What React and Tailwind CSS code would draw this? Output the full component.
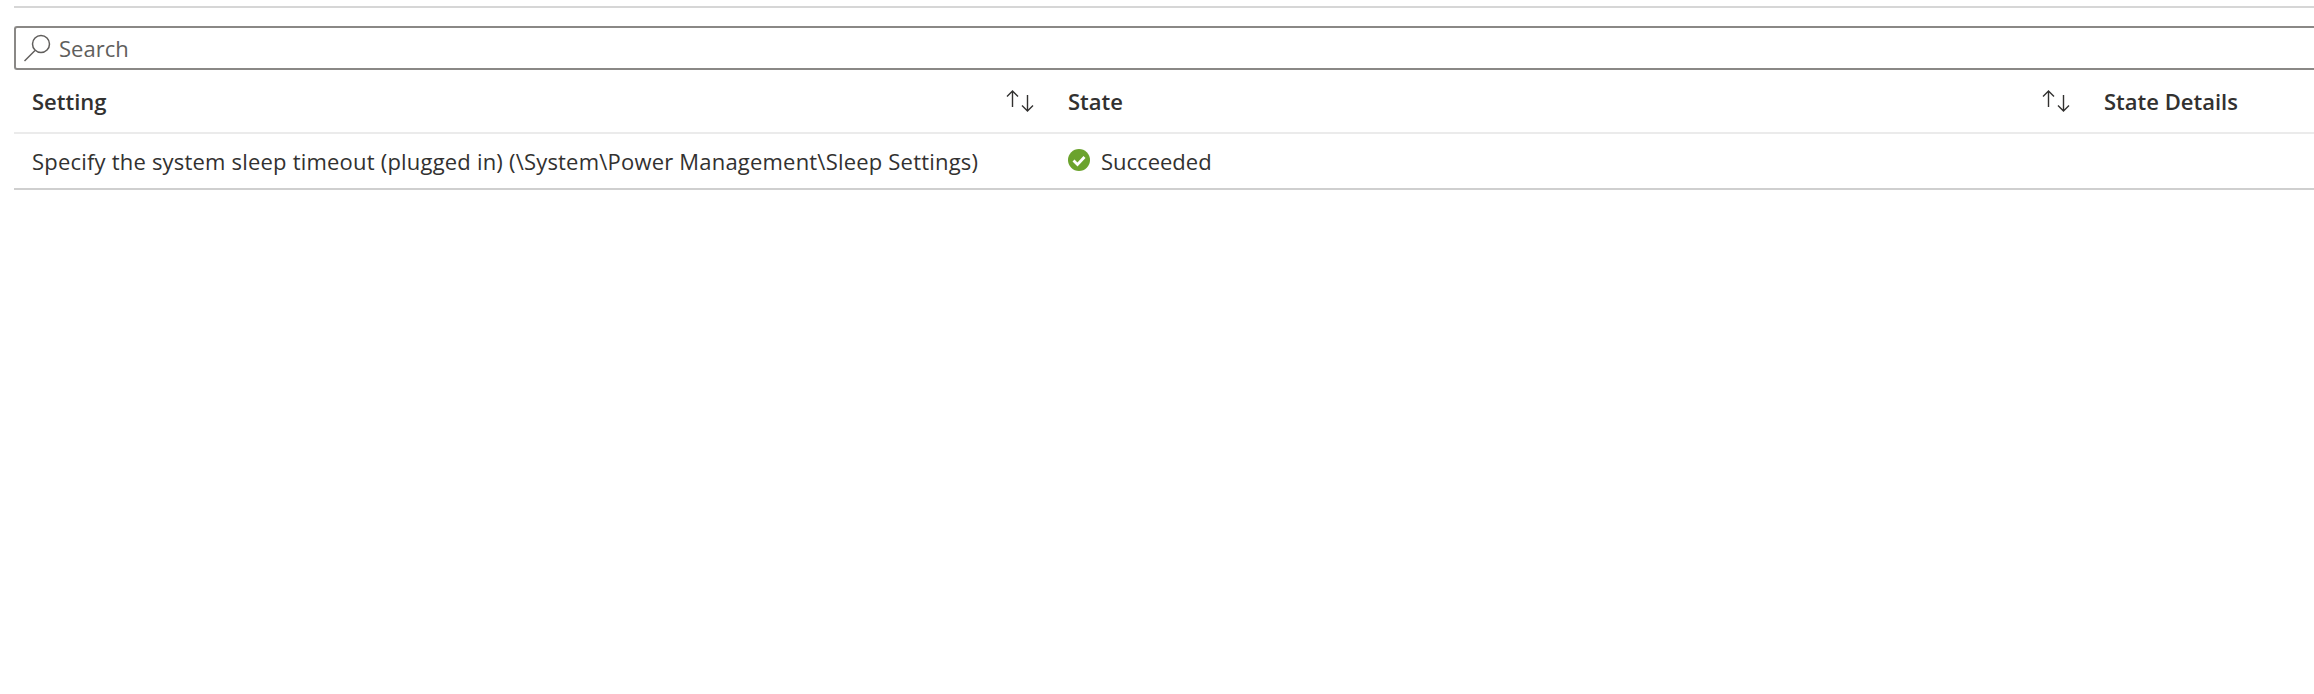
import React from 'react';

function SortIcon() {
    return (
        <svg width="28" height="22" viewBox="0 0 28 22" fill="none" stroke="#323130" strokeWidth="1.4" className="shrink-0">
            <path d="M6.500 17V1M1 6.500 6.500 1 12 6.500" />
            <path d="M21.500 5v16M16 15.500 21.500 21l5.500-5.500" />
        </svg>
    );
}

function HeaderCell({ label, sort }) {
    return (
        <div className="flex items-center justify-between pl-[18px] pr-[16px]">
            <span className="font-semibold text-[#323130]">{label}</span>
            {sort && <SortIcon />}
        </div>
    );
}

export default function App() {
    return (
        <div className="min-h-[694px] bg-white pl-[14px] pt-[6px] text-[22px] leading-[30px] text-[#323130] font-['Open_Sans',sans-serif] overflow-hidden">
            <div className="h-[2px] bg-[#d6d6d6]" />

            {/* Search */}
            <div className="mt-[18px] flex h-[44px] items-center rounded-l-[3px] border-2 border-r-0 border-[#8a8886] pl-[7px]">
                <svg width="28" height="28" viewBox="0 0 28 28" fill="none" stroke="#605e5c" strokeWidth="1.5" className="shrink-0">
                    <circle cx="18" cy="10" r="8.500" />
                    <path d="M12 16.500 1.500 27" />
                </svg>
                <span className="ml-[8px] text-[#605e5c]">Search</span>
            </div>

            {/* Table */}
            <div className="grid grid-cols-[1036px_1036px_1fr]">
                <div className="col-span-3 grid h-[64px] grid-cols-subgrid border-b-2 border-[#ebebeb]">
                    <HeaderCell label="Setting" sort />
                    <HeaderCell label="State" sort />
                    <HeaderCell label="State Details" />
                </div>
                <div className="col-span-3 grid h-[56px] grid-cols-subgrid border-b-2 border-[#cfcfcf]">
                    <div className="flex items-center pl-[18px] tracking-[0.2px]">
                        {'Specify the system sleep timeout (plugged in) (\\System\\Power Management\\Sleep Settings)'}
                    </div>
                    <div className="flex items-center gap-[11px] pl-[18px]">
                        <svg width="22" height="22" viewBox="0 0 22 22" className="shrink-0 -translate-y-px">
                            <circle cx="11" cy="11" r="11" fill="#6ba32d" />
                            <path d="M5.500 11.500 9.500 15.500 16.500 8" fill="none" stroke="#fff" strokeWidth="2.800" />
                        </svg>
                        <span>Succeeded</span>
                    </div>
                    <div />
                </div>
            </div>
        </div>
    );
}
